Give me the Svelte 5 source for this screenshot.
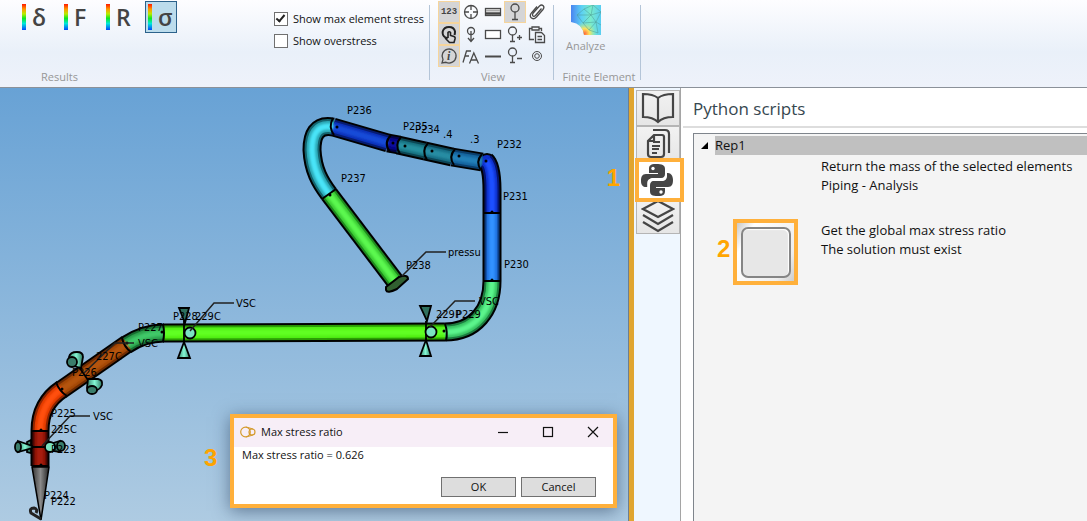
<script>
    let showMax = $state(true);
    let showOver = $state(false);
    let result = $state('σ');
    let activeTab = $state('python');

    const results = ['δ', 'F', 'R', 'σ'];
    const tabs = ['book', 'docs', 'python', 'layers'];

    const tools = [
        { name: 'numbers', on: true },
        { name: 'target' },
        { name: 'thickness' },
        { name: 'pin', on: true },
        { name: 'clip' },
        { name: 'touch', on: true },
        { name: 'pinDown' },
        { name: 'rect' },
        { name: 'pinPlus' },
        { name: 'paste' },
        { name: 'info', on: true },
        { name: 'font' },
        { name: 'line' },
        { name: 'pinMinus' },
        { name: 'ring' }
    ];

    // Pipe elements, drawn back to front
    const pipes = [
        { d: 'M333 127C316 124 312 136 312 150C313 170 320 182 329 194', dark: '#14646f', base: '#2ba7b5', light: '#48e4f8' },
        { d: 'M329 194L395 281', dark: '#1f8a1f', base: '#3ccc34', light: '#5cf850' },
        { d: 'M333 127L388 143', dark: '#061c70', base: '#0c30b8', light: '#174bd8' },
        { d: 'M388 143L399 145', dark: '#02024a', base: '#050580', light: '#0a0aa0' },
        { d: 'M398 145L425 151', dark: '#0c4653', base: '#17707f', light: '#2591a0' },
        { d: 'M425 151L452 157', dark: '#0c4658', base: '#176c84', light: '#258ca3' },
        { d: 'M452 157L482 162', dark: '#0b3f6c', base: '#14639d', light: '#2380b8' },
        { d: 'M492 213V190Q492 166 486 161', dark: '#04146e', base: '#0e30cc', light: '#1f50ff' },
        { d: 'M492 281V213', dark: '#0c3c82', base: '#1d70de', light: '#3191ff' },
        { d: 'M445 332C475 332 492 310 492 281', dark: '#1d7c40', base: '#38c462', light: '#5cf48c' },
        { d: 'M163 333L445 332', dark: '#2c9d05', base: '#50ee14', light: '#60ff20' },
        { d: 'M164 333C149 333 138 337 126 345', dark: '#176b31', base: '#2ca04c', light: '#3fc868' },
        { d: 'M127 344L61 390', dark: '#6e2b02', base: '#a04607', light: '#b5540d' },
        { d: 'M62 389C47 399 40 412 40 431', dark: '#8b2500', base: '#e13a00', light: '#ff4f0c' },
        { d: 'M40 431V466', dark: '#4c0703', base: '#8c1406', light: '#a81d0b' }
    ];

    // Joints between neighbouring elements
    const joints = [
        'M333 118Q328 127 334 135', 'M391 135Q383 143 390 152', 'M401 137Q394 145 400 154',
        'M428 143Q421 151 427 160', 'M455 149Q448 157 454 165', 'M482 154Q475 162 481 170',
        'M322 199L336 189', 'M484 213H501', 'M484 281H501', 'M445 324Q448 332 446 341',
        'M163 324Q165 333 163 342', 'M122 338Q124 347 131 352', 'M56 382Q59 391 67 396',
        'M32 431H49', 'M32 466H49', 'M32 447H49'
    ];

    const nodes = [
        [337, 127], [393, 143], [405, 146], [432, 151], [459, 156], [486, 161], [330, 195], [492, 212],
        [492, 280], [444, 331], [162, 332], [127, 343], [62, 389], [41, 430], [41, 465]
    ];

    const leaders = [
        'M190 331L214 303H234', 'M430 327L455 301H475', 'M402 276L426 252H446',
        'M84 373L115 343H134', 'M42 446L70 416H90'
    ];

    const labels = [
        ['P236', 347, 114], ['P235', 403, 130], ['P234', 415, 133], ['.4', 443, 138], ['.3', 470, 143],
        ['P232', 497, 148], ['P237', 341, 182], ['P231', 503, 200], ['P230', 504, 268], ['P238', 406, 269],
        ['pressu', 448, 256], ['VSC', 236, 307], ['VSC', 479, 305], ['229P', 436, 318], ['P229', 456, 318],
        ['P228', 173, 320], ['229C', 195, 320], ['P227', 138, 331], ['VSC', 138, 347], ['227C', 96, 360],
        ['P226', 72, 376], ['P225', 51, 417], ['VSC', 93, 420], ['225C', 51, 433], ['P223', 51, 453],
        ['P224', 44, 499], ['P222', 51, 505]
    ];
</script>

{#snippet toolIcon(name)}
    <svg class="icon" viewBox="0 0 22 22">
        {#if name === 'target'}
            <circle cx="11" cy="11" r="6.500" />
            <path d="M11 4V9M11 13V18M4 11H9M13 11H18" />
        {:else if name === 'thickness'}
            <rect x="3.500" y="7.500" width="15" height="7" fill="#fff" />
            <path d="M4 9.500H18" stroke="#aaa" stroke-width="2" />
            <path d="M3 12.500H19" stroke="#444" stroke-width="2.500" />
        {:else if name === 'pin'}
            <circle cx="11" cy="7" r="4" />
            <path d="M11 11V18M8 18.500H14" />
        {:else if name === 'clip'}
            <path d="M15.500 7.500L9.500 14.500Q7.800 16 6.700 14.700Q6 13.500 7.200 12L13.500 5Q15.500 3.200 17.200 4.700Q18.700 6.300 17 8.500L10.500 16Q7.500 19 5.200 16.800Q3.200 14.500 5.500 11.800L11 5.500" />
        {:else if name === 'touch'}
            <path stroke="#222" stroke-width="2" d="M7.500 14.500Q4 12.500 4.700 8.500Q6 4 11 4Q16 4 17 8.500Q17 10.500 16.500 12" />
            <path stroke="#222" stroke-width="1.600" fill="#d5d5d6" d="M10 15V9.500Q11.200 8 12.500 9.500V12.500L16 13.500Q17.500 14 17 16L16 19.500H11.500L7.500 15.500Q7.500 14 10 15" />
        {:else if name === 'pinDown'}
            <circle cx="11" cy="8" r="3.500" />
            <path d="M11 8V18M8 15L11 18.500L14 15" />
        {:else if name === 'rect'}
            <rect x="3.500" y="7.500" width="15" height="8" fill="#fff" />
        {:else if name === 'pinPlus'}
            <circle cx="8.500" cy="8" r="4" />
            <path d="M8.500 12V18M6 18.500H11M13 14.500H18M15.500 12V17" />
        {:else if name === 'paste'}
            <path d="M8 16.500H3.500V5.500H6M13 5.500H15.500V8M6 4H13V7H6ZM9.500 9.500H15.500L18.500 12.500V19.500H9.500ZM11.500 13.500H16M11.500 16.500H16" />
        {:else if name === 'info'}
            <path d="M4 18L5 14.500A7 7 0 1 1 8 17.300Z" />
            <text x="9" y="15">i</text>
        {:else if name === 'font'}
            <path d="M3 17.500L6.500 6H11M5 11H9M9.500 18.500L13.800 8L18.500 18.500M11 15H17" />
        {:else if name === 'line'}
            <path stroke-width="2" d="M3 11.500H19" />
        {:else if name === 'pinMinus'}
            <circle cx="8.500" cy="7" r="4" />
            <path d="M8.500 11V17M6 17.500H11M13 13.500H18" />
        {:else if name === 'ring'}
            <circle cx="11" cy="11" r="4.500" stroke-width="1" />
            <circle cx="11" cy="11" r="2.300" stroke-width="1" />
        {/if}
    </svg>
{/snippet}

<div class="app">
    <header class="ribbon">
        <section class="group results">
            <div class="content">
                <div class="modes">
                    {#each results as r}
                        <button class="mode" class:selected={result === r} onclick={() => (result = r)}>
                            <span class="scale"></span>{r}
                        </button>
                    {/each}
                </div>
                <div class="checks">
                    <label><input type="checkbox" bind:checked={showMax} />Show max element stress</label>
                    <label><input type="checkbox" bind:checked={showOver} />Show overstress</label>
                </div>
            </div>
            <h2>Results</h2>
        </section>

        <section class="group view">
            <div class="tools">
                {#each tools as tool}
                    <button class="tool" class:on={tool.on} aria-label={tool.name}>
                        {#if tool.name === 'numbers'}123{:else}{@render toolIcon(tool.name)}{/if}
                    </button>
                {/each}
            </div>
            <h2>View</h2>
        </section>

        <section class="group element">
            <button class="analyze">
                <svg width="30" height="30" viewBox="0 0 30 30">
                    <defs>
                        <linearGradient id="mesh">
                            <stop offset="0" stop-color="#4a84f0" />
                            <stop offset="0.35" stop-color="#5cd0f4" />
                            <stop offset="0.65" stop-color="#7aeccb" />
                            <stop offset="1" stop-color="#58cdf2" />
                        </linearGradient>
                        <radialGradient id="hot" cx="0.45" cy="0.95" r="0.4">
                            <stop offset="0" stop-color="#ff6a3c" />
                            <stop offset="0.4" stop-color="#ffe05a" />
                            <stop offset="1" stop-color="#8df0b0" stop-opacity="0" />
                        </radialGradient>
                    </defs>
                    <path fill="url(#mesh)" d="M0 0H30V30H13Q12 19 0 17Z" />
                    <path fill="url(#hot)" d="M0 0H30V30H13Q12 19 0 17Z" />
                    <path fill="none" stroke="#4d9b94" stroke-width="0.500" d="M6 10L13 4L22 0L20 10L30 7M6 10L20 10L13 4M6 10L12 18L20 10L25 17L30 7M12 18L25 17L18 25L12 18M18 25L27 28L25 17L30 20M22 0L30 7" />
                </svg>
                Analyze
            </button>
            <h2>Finite Element</h2>
        </section>
    </header>

    <main>
        <div class="viewport">
            <svg class="scene" viewBox="0 88 628 433" preserveAspectRatio="xMinYMin slice">
                <defs>
                    <linearGradient id="cone">
                        <stop offset="0" stop-color="#333" />
                        <stop offset="0.5" stop-color="#8a8a8a" />
                        <stop offset="1" stop-color="#222" />
                    </linearGradient>
                    <linearGradient id="support">
                        <stop offset="0" stop-color="#357f69" />
                        <stop offset="0.5" stop-color="#84f8d4" />
                        <stop offset="1" stop-color="#2f7560" />
                    </linearGradient>
                    <filter id="soft" x="0" y="88" width="628" height="433" filterUnits="userSpaceOnUse">
                        <feGaussianBlur stdDeviation="1" />
                    </filter>
                </defs>

                <g class="outline">
                    {#each pipes as p}<path d={p.d} />{/each}
                </g>
                <circle cx="487" cy="162" r="8" fill="#0e30cc" stroke="#000" stroke-width="2" />
                {#each pipes as p}
                    <path class="pipe" d={p.d} stroke={p.dark} stroke-width="15" />
                    <path class="pipe" d={p.d} stroke={p.base} stroke-width="11" />
                {/each}
                <g filter="url(#soft)">
                    {#each pipes as p}<path class="pipe" d={p.d} stroke={p.light} stroke-width="6" />{/each}
                </g>

                <path fill="url(#cone)" stroke="#000" stroke-width="1.500" d="M32 467H49L41 520Z" />
                <path class="hook" d="M41 519L31 513Q29 508 34 508Q38 509 36 513" />
                <path class="flange" d="M386 287L399 277Q408 274 408 279L397 289Q387 294 386 290Z" />

                {#each joints as d}<path class="joint" {d} />{/each}

                <g class="support">
                    <path fill="#2f705e" d="M179 308H189L185 323Z" />
                    <path d="M184 342L190 358H178Z" />
                    <path fill="#2f705e" d="M420 306H431L427 321Z" />
                    <path d="M426 340L431 356H420Z" />
                    <path d="M184 321V342M426 321V340" />
                    <circle cx="190" cy="333" r="5.500" />
                    <circle cx="431" cy="332" r="5.500" />

                    <path d="M69 357Q70 352 77 352Q83 352 83 357L81 368L74 366Z" />
                    <ellipse class="dim" cx="72" cy="362" rx="5" ry="5" />
                    <path d="M88 379L98 379Q103 380 102 385Q100 390 94 391L87 388Z" />
                    <ellipse class="dim" cx="92" cy="390" rx="5" ry="4" />
                    <path d="M79 367L88 380" />

                    <path class="dim" d="M27 442L31 440V453L27 452Z" />
                    <path d="M18 441L32 446V448L18 452Z" />
                    <ellipse class="dim" cx="18" cy="447" rx="3" ry="5" />
                    <path class="dim" d="M53 443L60 441V452L53 451Z" />
                    <ellipse class="dim" cx="61" cy="446" rx="4" ry="5" />
                    <circle cx="50" cy="447" r="5" />
                </g>

                {#each nodes as [x, y]}<circle cx={x} cy={y} r="1.500" />{/each}
                {#each leaders as d}<path class="leader" {d} />{/each}
                {#each labels as [text, x, y]}<text {x} {y}>{text}</text>{/each}
            </svg>

            <span class="step step-one">1</span>
            <span class="step step-three">3</span>

            <div class="dialog" role="dialog" aria-labelledby="dialog-title">
                <div class="titlebar">
                    <svg width="16" height="12" viewBox="0 0 16 12" fill="none" stroke="#d59b2d" stroke-width="1.200">
                        <circle cx="5.500" cy="6" r="4.800" />
                        <circle cx="12" cy="6" r="3" />
                        <path d="M6 1L13 3M6 11L13 9" />
                    </svg>
                    <span id="dialog-title">Max stress ratio</span>
                    <button aria-label="Minimize"><svg viewBox="0 0 12 12"><path d="M1 6.500H11" /></svg></button>
                    <button aria-label="Maximize"><svg viewBox="0 0 12 12"><rect x="1.500" y="1.500" width="9" height="9" /></svg></button>
                    <button aria-label="Close"><svg viewBox="0 0 12 12"><path d="M1 1L11 11M11 1L1 11" /></svg></button>
                </div>
                <p>Max stress ratio = 0.626</p>
                <div class="actions">
                    <button>OK</button>
                    <button>Cancel</button>
                </div>
            </div>
        </div>

        <div class="splitter"></div>

        <nav class="tabs">
            {#each tabs as tab}
                <button class="tab" class:active={activeTab === tab} aria-label={tab} onclick={() => (activeTab = tab)}>
                    <svg width="34" height="34" viewBox="0 0 34 34">
                        {#if tab === 'book'}
                            <path d="M17 7Q12 3 2 3V26Q12 26 17 31Q22 26 32 26V3Q22 3 17 7V30" />
                        {:else if tab === 'docs'}
                            <path d="M13 8H21Q23 8 23 10V27Q23 30 20 30H10Q7 30 7 27V14ZM13 8V14H7M12 15H19M11 19H19M11 22H18M11 26H16M12 3H24Q28 3 28 7V26" />
                        {:else if tab === 'python'}
                            <path class="solid" d="M16 1C10 1 9 3 9 6V10H18V11H6C2 11 1 14 1 18C1 22 3 24 6 24H8V20C8 17 10 15 13 15H21C24 15 25 13 25 11V6C25 2 22 1 16 1Z" />
                            <path class="solid" d="M18 33C24 33 25 31 25 28V25H16V24H28C32 24 33 21 33 17C33 13 31 10 28 10H27V13C27 16 25 18 22 18H14C11 18 10 20 10 23V28C10 32 12 33 18 33Z" />
                            <path class="gap" d="M8 25V20Q8 16.500 12 16.500H21Q26 16.500 26 12V9" />
                            <circle class="eye" cx="13" cy="5.500" r="1.700" />
                            <circle class="eye" cx="21" cy="29" r="1.700" />
                        {:else}
                            <path d="M17 2L32 10L17 18L2 10ZM2 16L17 25L32 16M2 23L17 32L32 23" />
                        {/if}
                    </svg>
                </button>
            {/each}
        </nav>

        <aside class="panel">
            <h1>Python scripts</h1>
            <div class="tree">
                <div class="folder">
                    <svg width="7" height="7" viewBox="0 0 7 7"><path d="M7 0V7H0Z" /></svg>
                    <span>Rep1</span>
                </div>
                <div class="script">
                    <p>Return the mass of the selected elements<br />Piping - Analysis</p>
                </div>
                <div class="script">
                    <span class="step">2</span>
                    <button class="run" aria-label="Get the global max stress ratio"><span class="key"></span></button>
                    <p>Get the global max stress ratio<br />The solution must exist</p>
                </div>
            </div>
        </aside>
    </main>
</div>

<style>
    :global(body) {
        margin: 0;
        font-family: "Open Sans", "Noto Sans", sans-serif;
        font-size: 11px;
        color: #111;
    }

    button {
        font: inherit;
        color: inherit;
        padding: 0;
        border: 0;
        background: none;
    }

    h1, h2, p {
        margin: 0;
        font-weight: normal;
    }

    .app {
        display: flex;
        flex-direction: column;
        min-height: 100vh;
    }

    .ribbon {
        display: flex;
        height: 87px;
        border-bottom: 1px solid #8b9199;
        background: linear-gradient(#fdfdff, #e9f0f9 60%, #eef2fa);
    }

    .group {
        position: relative;
        display: flex;
        flex-direction: column;
        justify-content: space-between;
        box-sizing: border-box;
        padding: 1px 8px 2px;
    }

    .group::after {
        content: "";
        position: absolute;
        right: 0;
        top: 5px;
        bottom: 7px;
        width: 1px;
        background: #b4c5d8;
    }

    .group h2 {
        font-size: 11px;
        line-height: 16px;
        text-align: center;
        color: #979797;
    }

    .results {
        width: 430px;
        padding-left: 19px;
        padding-right: 6px;
    }

    .results h2 {
        text-align: left;
        padding-left: 22px;
    }

    .content {
        display: flex;
        justify-content: space-between;
    }

    .modes {
        display: flex;
        gap: 10px;
    }

    .mode {
        display: flex;
        align-items: center;
        gap: 6px;
        box-sizing: border-box;
        width: 32px;
        height: 32px;
        padding-left: 2px;
        border: 1px solid transparent;
        font: 600 23px/26px "Open Sans", sans-serif;
        color: #444;
    }

    .mode.selected {
        border-color: #2c628b;
        background: #bcdcec;
    }

    .scale {
        width: 4px;
        height: 26px;
        background: linear-gradient(#ff1800, #ff9a00 20%, #b8ec00 38%, #10e820 55%, #00e8d8 75%, #0048ff);
    }

    .checks {
        display: flex;
        flex-direction: column;
        gap: 6px;
        padding-top: 10px;
    }

    .checks label {
        display: flex;
        align-items: center;
        gap: 5px;
        line-height: 16px;
    }

    .checks input {
        appearance: none;
        display: grid;
        box-sizing: border-box;
        width: 14px;
        height: 14px;
        margin: 0;
        border: 1px solid #707070;
        background: #fff;
    }

    .checks input:checked::after {
        content: "";
        width: 3px;
        height: 7px;
        margin: 0 auto;
        border: solid #222;
        border-width: 0 2px 2px 0;
        transform: rotate(40deg);
    }

    .tools {
        display: grid;
        grid-template-columns: repeat(5, 22px);
    }

    .tool {
        box-sizing: border-box;
        width: 22px;
        height: 22px;
        border: 1px solid transparent;
        font: bold 9px/18px "Liberation Mono", monospace;
        color: #444;
    }

    .tool.on {
        border-color: #f6d59c;
        background: #d5d5d6;
    }

    .icon {
        display: block;
        width: 22px;
        height: 22px;
        margin: -1px;
        fill: none;
        stroke: #4a4a4a;
        stroke-width: 1.3;
    }

    .icon text {
        font: italic bold 12px "Liberation Serif", serif;
        fill: #444;
        stroke: none;
    }

    .view {
        width: 124px;
        padding-right: 6px;
    }

    .element {
        min-width: 87px;
        padding-left: 7px;
        padding-right: 4px;
        white-space: nowrap;
    }

    .analyze {
        display: flex;
        flex-direction: column;
        align-items: center;
        align-self: flex-start;
        gap: 3px;
        padding: 4px 5px;
        line-height: 16px;
        color: #979797;
    }

    main {
        display: flex;
        flex: 1;
    }

    .viewport {
        position: relative;
        flex: 628 1 0;
        min-width: 0;
        overflow: hidden;
        border-right: 1px solid #6d7f91;
        background: linear-gradient(#68a2d5, #aecbe2);
    }

    .scene {
        position: absolute;
        width: 100%;
        height: 100%;
    }

    .scene text {
        font: 11px "DejaVu Sans Condensed", "DejaVu Sans", sans-serif;
        fill: #000;
    }

    .outline path {
        fill: none;
        stroke: #000;
        stroke-width: 19;
    }

    .pipe {
        fill: none;
    }

    .joint, .leader {
        fill: none;
        stroke: #000;
        stroke-width: 2;
    }

    .leader {
        stroke: #222;
        stroke-width: 1.5;
    }

    .hook {
        fill: none;
        stroke: #222;
        stroke-width: 3;
    }

    .flange {
        fill: #315f31;
        stroke: #000;
        stroke-width: 2;
    }

    .support {
        fill: url(#support);
        stroke: #000;
        stroke-width: 1.8;
    }

    .support circle {
        fill: #7be3c2;
    }

    .dim {
        fill: #3a7d6b;
    }

    .step {
        font: bold 24px/24px "Liberation Sans", sans-serif;
        color: #ffa500;
    }

    .step-one {
        position: absolute;
        top: 78px;
        right: 8px;
    }

    .step-three {
        position: absolute;
        left: 204px;
        bottom: 51px;
    }

    .dialog {
        position: absolute;
        left: 230px;
        right: 11px;
        bottom: 13px;
        border: 4px solid #ffb03b;
        background: #fff;
        box-shadow: 0 3px 16px rgba(20, 40, 70, 0.5);
    }

    .titlebar {
        display: flex;
        align-items: center;
        gap: 4px;
        height: 28px;
        padding-left: 6px;
        padding-bottom: 1px;
        margin-bottom: -1px;
        background: #f7eef7;
    }

    .titlebar span {
        flex: 1;
        padding-left: 1px;
        line-height: 16px;
    }

    .titlebar button {
        display: grid;
        place-items: center;
        width: 41px;
        height: 24px;
    }

    .titlebar button svg {
        width: 12px;
        height: 12px;
        fill: none;
        stroke: #111;
        stroke-width: 1.2;
    }

    .dialog p {
        padding: 0 8px;
        line-height: 18px;
    }

    .actions {
        display: flex;
        justify-content: flex-end;
        gap: 5px;
        padding: 13px 17px 7px;
    }

    .actions button {
        width: 75px;
        height: 20px;
        border: 1px solid #707070;
        background: #ddd;
        line-height: 16px;
    }

    .splitter {
        width: 5px;
        background: #e0a52f;
    }

    .tabs {
        display: flex;
        flex-direction: column;
        width: 46px;
        padding-top: 2px;
        padding-left: 2px;
        box-sizing: border-box;
        background: #eff7ff;
    }

    .tab {
        display: grid;
        place-items: center;
        box-sizing: border-box;
        height: 36px;
        border: 1px solid #b5b5b5;
        background: linear-gradient(#f2f2f2, #e6e6e6);
    }

    .tab.active {
        position: relative;
        z-index: 1;
        height: 44px;
        margin: -4px -4px -4px -1px;
        padding-right: 5px;
        border: 4px solid #ffb03b;
        background: #fff;
    }

    .tab svg {
        fill: none;
        stroke: #454545;
        stroke-width: 2.2;
    }

    .tab .solid {
        fill: #454545;
        stroke: none;
    }

    .tab .gap {
        stroke: #fff;
        stroke-width: 1.6;
    }

    .tab .eye {
        fill: #fff;
        stroke: none;
    }

    .panel {
        display: flex;
        flex-direction: column;
        flex: 406 1 0;
        min-width: 0;
        border-left: 1px solid #a5a5a5;
        background: #fff;
    }

    .panel h1 {
        margin-left: 2px;
        padding: 9px 10px 5px;
        border-bottom: 2px solid #ddd;
        font-size: 17px;
        line-height: 24px;
        color: #36474f;
    }

    .tree {
        flex: 1;
        margin-top: 5px;
        margin-left: 12px;
        border: solid #7f858c;
        border-width: 1px 0 0 1px;
        background: #f4f4f4;
        font-size: 13px;
        line-height: 19px;
    }

    .folder {
        display: flex;
        align-items: center;
        gap: 7px;
        padding: 2px 0 0 7px;
    }

    .folder span {
        flex: 1;
        background: #c0c0c0;
    }

    .script {
        display: grid;
        grid-template-columns: 16px 65px 1fr;
        align-items: start;
        min-height: 64px;
        padding-left: 23px;
        white-space: nowrap;
    }

    .script p {
        grid-column: 3;
        padding: 2px 0 0 23px;
    }

    .script .step {
        padding-top: 18px;
    }

    .run {
        display: grid;
        place-items: center;
        width: 65px;
        height: 66px;
        border: 4px solid #ffb03b;
        background: linear-gradient(120deg, #c8c8c8, #fff 20%, #eee 80%, #ccc);
    }

    .key {
        box-sizing: border-box;
        width: 50px;
        height: 51px;
        border: 2px solid #858585;
        border-radius: 7px;
        background: #e7e7e7;
        box-shadow: inset -1px 1px 1px #fff;
    }
</style>
